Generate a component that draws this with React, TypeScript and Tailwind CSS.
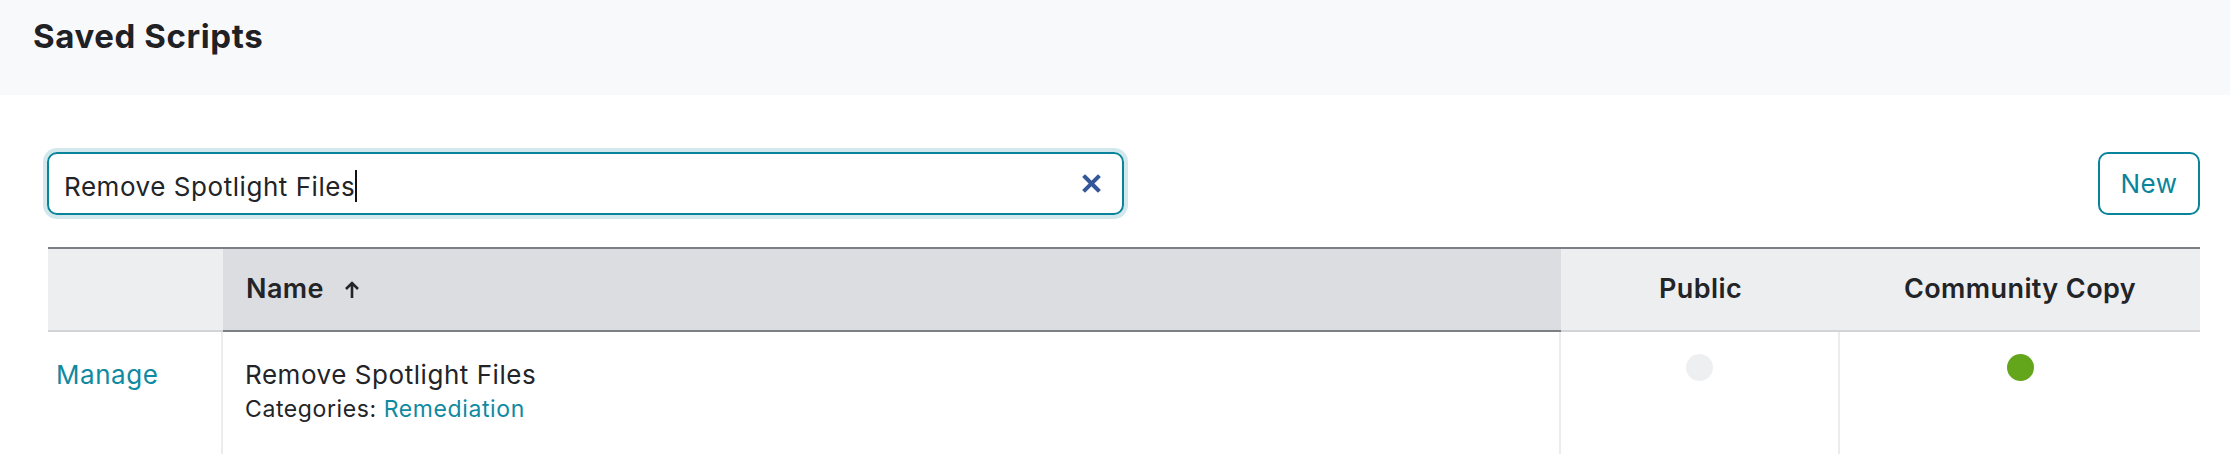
import React from "react";

// Column widths of the scripts table, left to right.
const COLS = "grid-cols-[175px_1338px_279px_1fr]";

function ClearIcon() {
  return (
    <svg width="19" height="19" viewBox="0 0 19 19" aria-hidden>
      <path d="M3 3 L16 16 M16 3 L3 16" stroke="#34579a" strokeWidth="4" strokeLinecap="square" fill="none" />
    </svg>
  );
}

function SortUpIcon() {
  return (
    <svg width="16" height="18" viewBox="0 0 16 18" aria-hidden>
      <path d="M8 17 V2 M2 8 L8 2 L14 8" stroke="#222428" strokeWidth="2.6" fill="none" />
    </svg>
  );
}

export default function App() {
  return (
    <div className="w-full min-h-[454px] bg-white font-['Inter','Liberation_Sans',sans-serif] text-[#222428]">
      {/* Page title */}
      <div className="h-[95px] bg-[#f8f9fb] px-[33px] pt-[20px]">
        <h1 className="text-[33px] font-bold leading-none tracking-[0.6px] text-[#1f2124]">Saved Scripts</h1>
      </div>

      <div className="pl-[47px] pr-[30px]">
        {/* Search + New */}
        <div className="mt-[57px] flex items-center justify-between">
          <div className="flex h-[63px] w-[1077px] items-center rounded-[10px] border-2 border-[#0a849b] pl-[15px] pr-[21px] shadow-[0_0_0_4px_#d3e8ec]">
            <span className="flex-1 text-[26px] leading-[34px] tracking-[0.55px]">
              Remove Spotlight Files
              <span className="inline-block h-[32px] w-[2px] translate-y-[6px] bg-[#111]" />
            </span>
            <ClearIcon />
          </div>
          <button className="h-[63px] w-[102px] rounded-[10px] border-2 border-[#0a849b] text-[26px] tracking-[0.5px] text-[#0a849b]">
            New
          </button>
        </div>

        {/* Table */}
        <div className="mt-[32px] ml-px border-t-2 border-[#7b7f86]">
          <div className={`grid ${COLS} h-[83px] text-[27px] font-semibold tracking-[0.4px]`}>
            <div className="border-b-2 border-[#d3d4d8] bg-[#edeef0]" />
            <div className="flex items-center gap-[20px] border-b-2 border-[#7b7f86] bg-[#dcdde0] pl-[23px]">
              Name
              <SortUpIcon />
            </div>
            <div className="flex items-center justify-center border-b-2 border-[#d3d4d8] bg-[#edeef0]">Public</div>
            <div className="flex items-center justify-center border-b-2 border-[#d3d4d8] bg-[#edeef0]">Community Copy</div>
          </div>

          <div className={`grid ${COLS} h-[140px]`}>
            <div className="border-r-2 border-[#ebecee] pl-[8px] pt-[26px]">
              <a className="text-[26px] leading-[34px] tracking-[0.55px] text-[#0f8aa1]">Manage</a>
            </div>
            <div className="border-r-2 border-[#ebecee] pl-[22px] pt-[26px]">
              <p className="text-[26px] leading-[34px] tracking-[0.55px]">Remove Spotlight Files</p>
              <p className="mt-[2px] text-[23px] leading-[30px] tracking-[0.6px]">
                Categories: <a className="text-[#0f8aa1]">Remediation</a>
              </p>
            </div>
            <div className="flex justify-center border-r-2 border-[#ebecee] pt-[22px]">
              <span className="h-[27px] w-[27px] rounded-full bg-[#eeeff1]" />
            </div>
            <div className="flex justify-center pt-[22px]">
              <span className="h-[27px] w-[27px] rounded-full bg-[#63a51b]" />
            </div>
          </div>
        </div>
      </div>
    </div>
  );
}
